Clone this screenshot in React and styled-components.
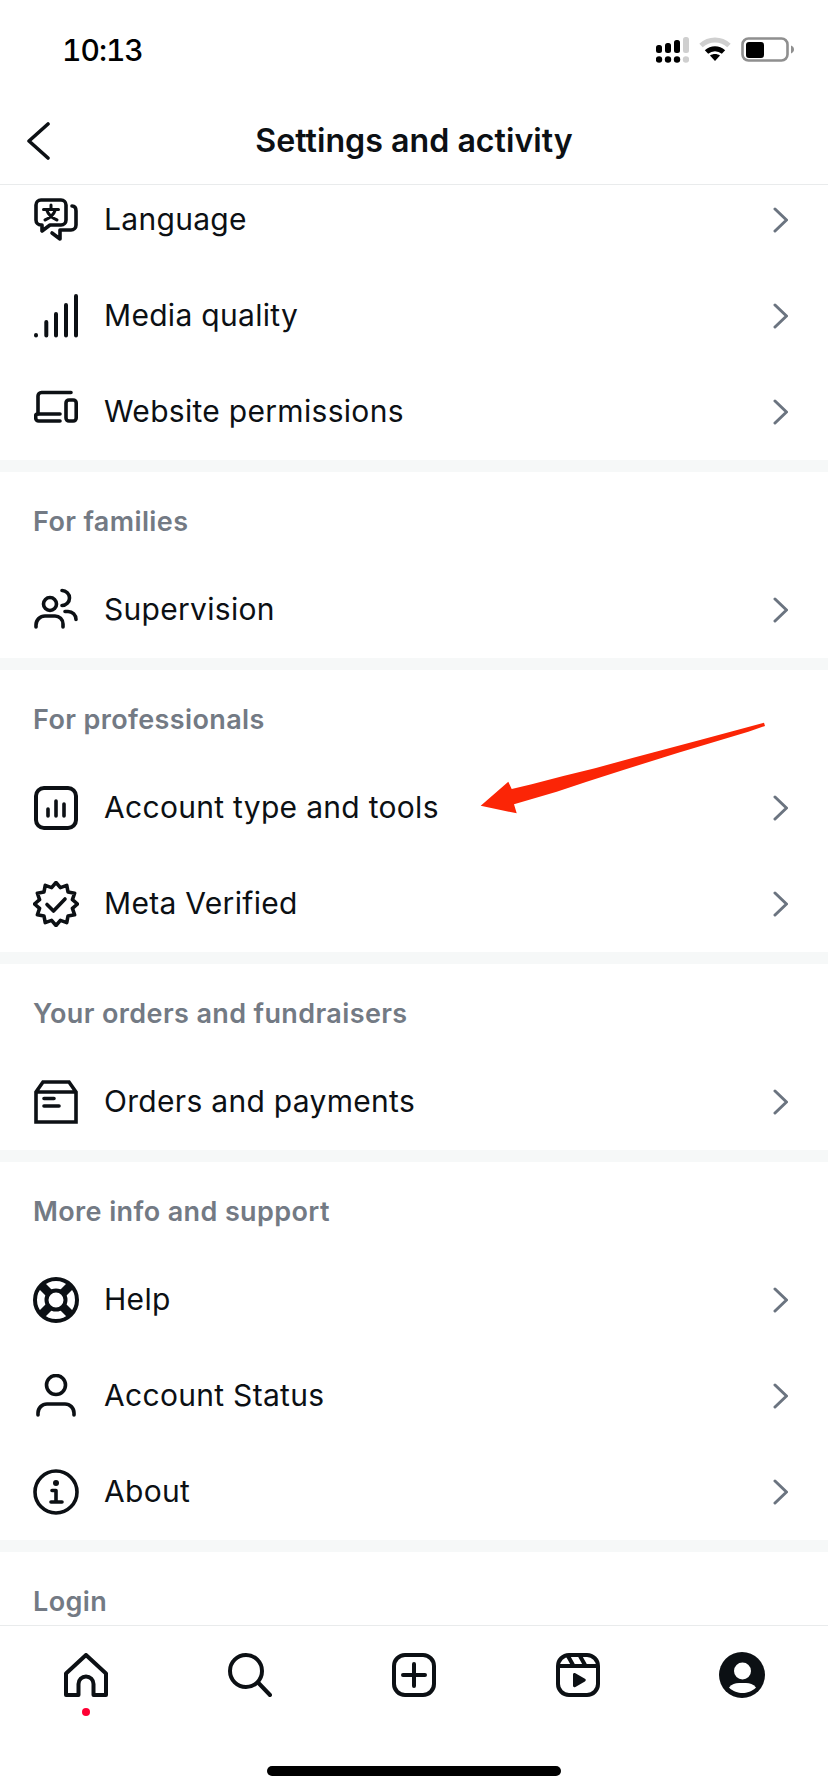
import React from "react";
import styled, { createGlobalStyle } from "styled-components";

const ink = "#0c1014";

const Global = createGlobalStyle`
  html, body { margin: 0; padding: 0; background: #fff; }
  * { box-sizing: border-box; }
  body { font-family: Inter, "Liberation Sans", sans-serif; color: ${ink}; }
`;

const Page = styled.div`
  position: relative;
  width: 828px;
  height: 1792px;
  display: flex;
  flex-direction: column;
  overflow: hidden;
  background: #fff;
`;

const StatusBar = styled.div`
  height: 98px;
  flex: none;
  display: flex;
  justify-content: space-between;
  align-items: flex-start;
  padding: 37px 34px 0 62px;
`;

const Clock = styled.span`
  font-size: 30px;
  line-height: 26px;
  font-weight: 500;
  font-variant-numeric: tabular-nums;
  letter-spacing: -1px;
  color: #000;
`;

const StatusIcons = styled.div`
  display: flex;
  align-items: flex-start;
  gap: 10px;
`;

const Header = styled.header`
  height: 87px;
  flex: none;
  display: grid;
  grid-template-columns: 1fr auto 1fr;
  align-items: center;
  padding-bottom: 1px;
  border-bottom: 1px solid #e9ebec;
`;

const BackIcon = styled.svg`
  display: block;
  width: 24px;
  height: 38px;
  margin-left: 26px;
  fill: none;
  stroke: ${ink};
  stroke-width: 3.6;
  stroke-linecap: round;
  stroke-linejoin: round;
`;

const Title = styled.h1`
  margin: 0;
  font-size: 32.2px;
  line-height: 36px;
  font-weight: 600;
`;

const Scroll = styled.main`
  flex: 1;
  min-height: 0;
  overflow: hidden;
`;

const List = styled.div`
  margin-top: -13px;
`;

const Band = styled.div`
  height: 12px;
  background: #f6f8f8;
`;

const SectionTitle = styled.h2`
  margin: 0;
  height: 90px;
  padding: 33px 0 0 33px;
  font-size: 27px;
  line-height: 34px;
  font-weight: 600;
  letter-spacing: 0.38px;
  color: #737a84;
`;

const Row = styled.div`
  height: 96px;
  display: flex;
  align-items: center;
  padding: 0 40px 0 34px;
`;

const RowIconBox = styled.span`
  width: 44px;
  height: 46px;
  flex: none;
  display: flex;
  align-items: center;
  justify-content: center;
`;

const Glyph = styled.svg.attrs((p) => ({ viewBox: `0 0 ${p.$size || 44} ${p.$size || 44}` }))`
  display: block;
  flex: none;
  width: ${(p) => p.$size || 44}px;
  height: ${(p) => p.$size || 44}px;
  fill: none;
  stroke: ${ink};
  stroke-width: ${(p) => p.$weight || 3.6};
  stroke-linecap: round;
  stroke-linejoin: round;
`;

const RowLabel = styled.span`
  flex: 1;
  margin-left: 26px;
  padding-bottom: 2px;
  font-size: 30px;
  line-height: 36px;
  font-weight: 400;
  letter-spacing: 0.3px;
`;

const Chevron = styled.svg`
  display: block;
  flex: none;
  width: 15px;
  height: 26px;
  fill: none;
  stroke: #6b7480;
  stroke-width: 3;
  stroke-linecap: round;
  stroke-linejoin: round;
`;

const Arrow = styled.svg`
  position: absolute;
  left: 470px;
  top: 715px;
  width: 300px;
  height: 105px;
`;

const BottomNav = styled.nav`
  height: 167px;
  flex: none;
  display: flex;
  flex-direction: column;
  border-top: 1px solid #e9ebec;
  background: #fff;
`;

const NavIcons = styled.div`
  display: flex;
  padding: 26px 4px 0;
`;

const NavItem = styled.div`
  position: relative;
  flex: 1;
  height: 46px;
  display: flex;
  align-items: center;
  justify-content: center;
`;

const Badge = styled.span`
  position: absolute;
  left: 78px;
  top: 56px;
  width: 8px;
  height: 8px;
  border-radius: 50%;
  background: #ff0033;
`;

const HomeBar = styled.div`
  width: 294px;
  height: 10px;
  margin: auto auto 16px;
  border-radius: 5px;
  background: #000;
`;

const Ink = styled.path`
  fill: ${ink};
  stroke: none;
`;

const starPoints = (() => {
  const pts = [];
  for (let i = 0; i < 24; i++) {
    const r = i % 2 === 0 ? 21.5 : 17;
    const a = (i / 24) * Math.PI * 2 - Math.PI / 2;
    pts.push(`${(23 + r * Math.cos(a)).toFixed(2)},${(23 + r * Math.sin(a)).toFixed(2)}`);
  }
  return pts.join(" ");
})();

const LanguageIcon = () => (
  <Glyph>
    <path d="M7 2H27a5 5 0 0 1 5 5V22a5 5 0 0 1-5 5H16L8 33V27H7a5 5 0 0 1-5-5V7a5 5 0 0 1 5-5Z" />
    <path d="M38 8c3 0 4 2 4 5V27a5 5 0 0 1-5 5H26V41L18 35" />
    <path strokeWidth="3" d="M17 7v4M9.5 11.5h15M21.5 11.5C20 16 16 20 11 22M12.5 11.5C14 16 18 20 23 22" />
  </Glyph>
);

const QualityIcon = () => (
  <Glyph>
    <path strokeWidth="4" d="M2 41v.5M12.3 28v13.5M22 20v21.5M32 11v30.500M42 2v39.500" />
  </Glyph>
);

const WebsiteIcon = () => (
  <Glyph>
    <path d="M4 24V6a3.500 3.500 0 0 1 3.500-3.500H37" />
    <path d="M26 24H3.500a1.800 1.800 0 0 0-1.800 1.800V28a3 3 0 0 0 3 3H26" />
    <rect x="32" y="10" width="10.200" height="21" rx="3" />
  </Glyph>
);

const PeopleIcon = () => (
  <Glyph>
    <circle cx="16" cy="16" r="6.500" />
    <path d="M2 39v-2a9 9 0 0 1 9-9h10a8 8 0 0 1 8 8v3" />
    <path d="M28 2.500a7.500 7.500 0 0 1 0 15" />
    <path d="M31 23.500h3a8 8 0 0 1 8 8" />
  </Glyph>
);

const AccountToolsIcon = () => (
  <Glyph>
    <rect x="2" y="2" width="40" height="40" rx="8" strokeWidth="4" />
    <path d="M14 23v7M22 15v15M30 18v12" />
  </Glyph>
);

const VerifiedIcon = () => (
  <Glyph $size={46}>
    <polygon points={starPoints} />
    <path d="M14 23.500l6.500 6.500L32 18" />
  </Glyph>
);

const OrdersIcon = () => (
  <Glyph>
    <path strokeLinejoin="miter" d="M2 12V42H42V12M2 12H42M2 12L9 2H35L42 12" />
    <path d="M10 18.500H20M10 26H25" />
  </Glyph>
);

const HelpIcon = () => (
  <Glyph $size={46}>
    <circle cx="23" cy="23" r="21" strokeWidth="4" />
    <circle cx="23" cy="23" r="9.500" strokeWidth="4" />
    <path strokeLinecap="butt" strokeWidth="8.500" d="M8 8L16 16M38 8L30 16M8 38L16 30M38 38L30 30" />
  </Glyph>
);

const PersonIcon = () => (
  <Glyph>
    <circle cx="22" cy="11" r="9.500" />
    <path d="M4 41v-2a9 9 0 0 1 9-9h18a9 9 0 0 1 9 9v2" />
  </Glyph>
);

const InfoIcon = () => (
  <Glyph $size={46}>
    <circle cx="23" cy="23" r="21" />
    <Ink d="M23 11a3 3 0 1 1 0 6a3 3 0 0 1 0-6Z" />
    <path d="M19 21.500h4V32.500M18 33h11" />
  </Glyph>
);

const sections = [
  {
    rows: [
      ["Language", LanguageIcon],
      ["Media quality", QualityIcon],
      ["Website permissions", WebsiteIcon],
    ],
  },
  { title: "For families", rows: [["Supervision", PeopleIcon]] },
  {
    title: "For professionals",
    rows: [
      ["Account type and tools", AccountToolsIcon],
      ["Meta Verified", VerifiedIcon],
    ],
  },
  { title: "Your orders and fundraisers", rows: [["Orders and payments", OrdersIcon]] },
  {
    title: "More info and support",
    rows: [
      ["Help", HelpIcon],
      ["Account Status", PersonIcon],
      ["About", InfoIcon],
    ],
  },
  { title: "Login", rows: [] },
];

const SignalIcon = () => (
  <svg width="33" height="26" viewBox="0 0 33 26">
    <g fill="#000">
      <rect x="0" y="8" width="6" height="8" rx="2.500" />
      <rect x="9" y="6" width="6" height="10" rx="2.500" />
      <rect x="18" y="3" width="6" height="13" rx="2.500" />
      <circle cx="3" cy="22.500" r="3.200" />
      <circle cx="12" cy="22.500" r="3.200" />
      <circle cx="21" cy="22.500" r="3.200" />
    </g>
    <g fill="#cfcfcf">
      <rect x="27" y="0" width="6" height="16" rx="2.500" />
      <circle cx="30" cy="22.500" r="3.200" />
    </g>
  </svg>
);

const WifiIcon = () => (
  <svg width="32" height="24" viewBox="0 0 32 24" fill="none">
    <path d="M2 8.500C10 1 22 1 30 8.500" stroke="#cfcfcf" strokeWidth="5" />
    <path d="M7.500 15C12.500 10.500 19.500 10.500 24.500 15" stroke="#000" strokeWidth="5" />
    <path d="M11 18.500C14 16.500 18 16.500 21 18.500L16 24Z" fill="#000" />
  </svg>
);

const BatteryIcon = () => (
  <svg width="53" height="26" viewBox="0 0 53 26">
    <rect x="1.500" y="1.500" width="45" height="22" rx="6" fill="none" stroke="#8f8f8f" strokeWidth="2.600" />
    <rect x="5" y="5" width="18" height="16" rx="3" fill="#000" />
    <path d="M50 8.500c2 .7 3 2.300 3 4s-1 3.300-3 4Z" fill="#8f8f8f" />
  </svg>
);

const NavHome = () => (
  <Glyph $weight={4}>
    <path strokeLinejoin="round" d="M2 42V20.500L22 2L42 20.500V42H29.500V31a7.500 7.500 0 0 0-15 0V42Z" />
  </Glyph>
);

const NavSearch = () => (
  <Glyph $weight={4}>
    <circle cx="18" cy="18" r="16" />
    <path d="M31 30.500L42 42" />
  </Glyph>
);

const NavCreate = () => (
  <Glyph $weight={4}>
    <rect x="2" y="2" width="40" height="40" rx="11" />
    <path d="M22 11v22M11 22h22" />
  </Glyph>
);

const NavReels = () => (
  <Glyph $weight={4}>
    <rect x="2" y="2" width="40" height="40" rx="11" />
    <path d="M2 13h40M12 3l5 9M24 3l5 9" strokeLinecap="butt" />
    <Ink d="M17 21.500c0-1.500 1.200-2 2.400-1.300l9.500 5.500c1.200.7 1.200 2 0 2.700l-9.500 5.500c-1.200.7-2.400.2-2.400-1.300Z" />
  </Glyph>
);

const NavProfile = () => (
  <svg width="46" height="46" viewBox="0 0 46 46">
    <circle cx="23" cy="23" r="23" fill={ink} />
    <circle cx="23.500" cy="19" r="8.500" fill="#fff" />
    <path d="M10 35.500C13 32 16 31 20 31H27C31 31 34 32 37 35.500C33 39.500 28 41 23.500 41S14 39.500 10 35.500Z" fill="#fff" />
  </svg>
);

export default function App() {
  return (
    <Page>
      <Global />
      <StatusBar>
        <Clock>10:13</Clock>
        <StatusIcons>
          <SignalIcon />
          <WifiIcon />
          <BatteryIcon />
        </StatusIcons>
      </StatusBar>
      <Header>
        <BackIcon viewBox="0 0 24 38">
          <path d="M22 2L3 19L22 36" />
        </BackIcon>
        <Title>Settings and activity</Title>
      </Header>
      <Scroll>
        <List>
          {sections.map((s, i) => (
            <section key={i}>
              {i > 0 && <Band />}
              {s.title && <SectionTitle>{s.title}</SectionTitle>}
              {s.rows.map(([label, Icon]) => (
                <Row key={label}>
                  <RowIconBox>
                    <Icon />
                  </RowIconBox>
                  <RowLabel>{label}</RowLabel>
                  <Chevron viewBox="0 0 15 26">
                    <path d="M2 2L13.500 13L2 24" />
                  </Chevron>
                </Row>
              ))}
            </section>
          ))}
        </List>
      </Scroll>
      <BottomNav>
        <NavIcons>
          <NavItem>
            <NavHome />
            <Badge />
          </NavItem>
          <NavItem>
            <NavSearch />
          </NavItem>
          <NavItem>
            <NavCreate />
          </NavItem>
          <NavItem>
            <NavReels />
          </NavItem>
          <NavItem>
            <NavProfile />
          </NavItem>
        </NavIcons>
        <HomeBar />
      </BottomNav>
      <Arrow viewBox="0 0 300 105">
        <path
          fill="#fb2506"
          d="M294 7.700L230 25L163.300 42.700L125 53.300L93.300 61L61.700 69.300L41.700 74L38.300 66.700L10.700 90.700L46.700 98.300L44 89.300L86.700 76.700L116.700 66.700L153.300 55L208.300 37.700L278.300 16.700L295 11Z"
        />
      </Arrow>
    </Page>
  );
}
